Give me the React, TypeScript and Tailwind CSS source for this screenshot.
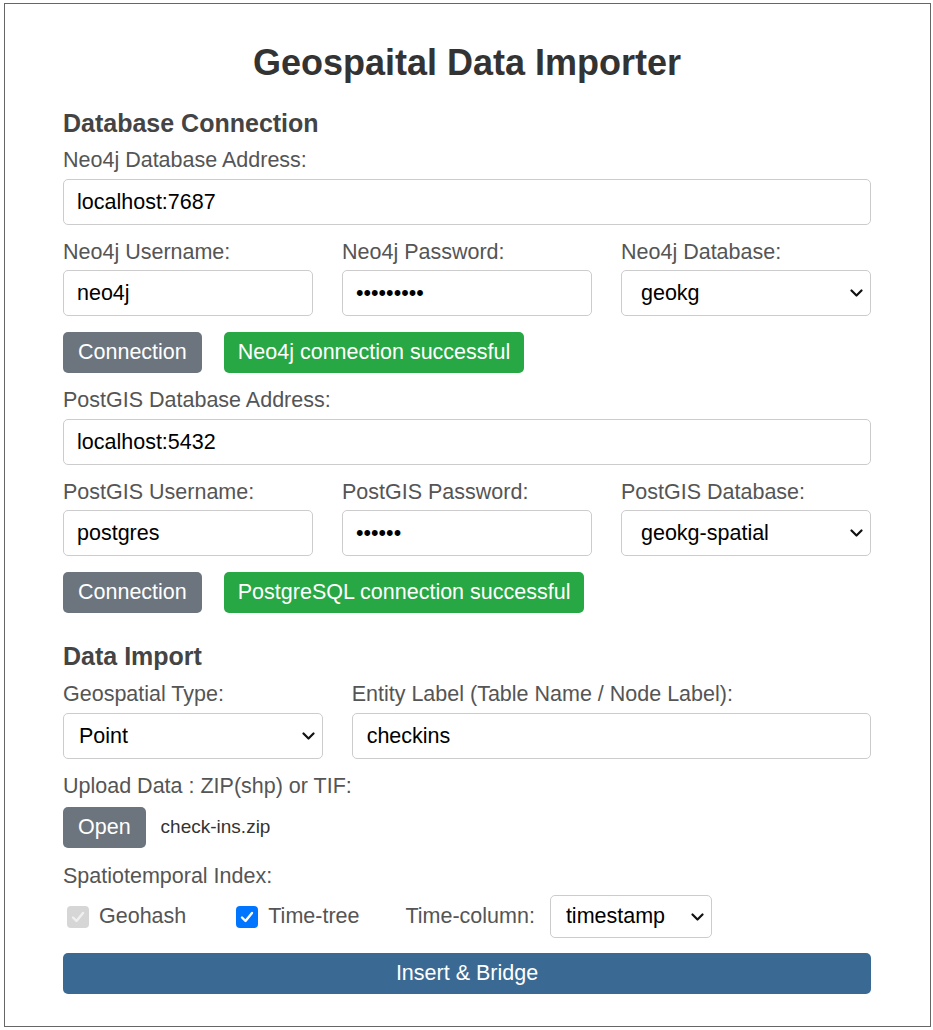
import type { ReactNode } from "react";

function Label({ children, className = "" }: { children: ReactNode; className?: string }) {
  return <div className={`text-[21.5px] leading-[24px] text-[#555] ${className}`}>{children}</div>;
}

function TextInput({ value, type = "text", className = "" }: { value: string; type?: string; className?: string }) {
  return (
    <input
      type={type}
      defaultValue={value}
      readOnly
      className={`block h-[46px] w-full rounded-[5px] border border-[#ccc] bg-white pl-[13px] text-[21.5px] text-black outline-none ${className}`}
    />
  );
}

function Chevron() {
  return (
    <svg width="13" height="8" viewBox="0 0 13 8" className="pointer-events-none absolute right-[8px] top-1/2 -translate-y-1/2">
      <path d="M1.5 1.5 L6.5 6.5 L11.5 1.5" fill="none" stroke="#111" strokeWidth="2.2" strokeLinecap="round" strokeLinejoin="round" />
    </svg>
  );
}

function Select({ value, className = "", pad = "pl-[15px]" }: { value: string; className?: string; pad?: string }) {
  return (
    <div className={`relative ${className}`}>
      <select
        defaultValue={value}
        className={`block h-full w-full appearance-none rounded-[5px] border border-[#ccc] bg-white ${pad} pr-[30px] text-[21.5px] text-black outline-none`}
      >
        <option>{value}</option>
      </select>
      <Chevron />
    </div>
  );
}

function GrayButton({ children }: { children: ReactNode }) {
  return (
    <button className="h-[41px] rounded-[5px] bg-[#6c757d] px-[15px] text-[21.5px] text-white">
      {children}
    </button>
  );
}

function Badge({ children }: { children: ReactNode }) {
  return (
    <span className="ml-[22px] flex h-[41px] items-center rounded-[5px] bg-[#28a745] px-[14px] text-[21.5px] text-white">
      {children}
    </span>
  );
}

function Check({ disabled = false }: { disabled?: boolean }) {
  return (
    <span
      className={`flex h-[22px] w-[22px] items-center justify-center rounded-[4px] ${
        disabled ? "bg-[#d6d6d6]" : "bg-[#0075ff]"
      }`}
    >
      <svg width="14" height="12" viewBox="0 0 14 12">
        <path
          d="M2 6.5 L5.5 10 L12 2"
          fill="none"
          stroke={disabled ? "#f0f0f0" : "#fff"}
          strokeWidth="2.4"
          strokeLinecap="round"
          strokeLinejoin="round"
        />
      </svg>
    </span>
  );
}

export default function App() {
  return (
    <main className="min-h-screen bg-white pl-[4px] pt-[3px] font-['Liberation_Sans',Arial,sans-serif]">
      <div className="w-[927px] border border-[#666] pb-[32px] pl-[58px] pr-[59px] pt-[37px]">
        <h1 className="text-center text-[36px] font-bold leading-[44px] text-[#333]">
          Geospaital Data Importer
        </h1>

        <h3 className="mt-[23px] text-[25px] font-bold leading-[30px] text-[#444]">Database Connection</h3>

        <Label className="mt-[10px]">Neo4j Database Address:</Label>
        <TextInput value="localhost:7687" className="mt-[7px]" />

        <div className="mt-[15px] grid grid-cols-3 gap-x-[29px]">
          <div>
            <Label>Neo4j Username:</Label>
            <TextInput value="neo4j" className="mt-[6px]" />
          </div>
          <div>
            <Label>Neo4j Password:</Label>
            <TextInput value="geokg1234" type="password" className="mt-[6px]" />
          </div>
          <div>
            <Label>Neo4j Database:</Label>
            <Select value="geokg" pad="pl-[19px]" className="mt-[6px] h-[46px]" />
          </div>
        </div>

        <div className="mt-[16px] flex items-center">
          <GrayButton>Connection</GrayButton>
          <Badge>Neo4j connection successful</Badge>
        </div>

        <Label className="mt-[15px]">PostGIS Database Address:</Label>
        <TextInput value="localhost:5432" className="mt-[7px]" />

        <div className="mt-[15px] grid grid-cols-3 gap-x-[29px]">
          <div>
            <Label>PostGIS Username:</Label>
            <TextInput value="postgres" className="mt-[6px]" />
          </div>
          <div>
            <Label>PostGIS Password:</Label>
            <TextInput value="123456" type="password" className="mt-[6px]" />
          </div>
          <div>
            <Label>PostGIS Database:</Label>
            <Select value="geokg-spatial" pad="pl-[19px]" className="mt-[6px] h-[46px]" />
          </div>
        </div>

        <div className="mt-[16px] flex items-center">
          <GrayButton>Connection</GrayButton>
          <Badge>PostgreSQL connection successful</Badge>
        </div>

        <h3 className="mt-[28px] text-[25px] font-bold leading-[30px] text-[#444]">Data Import</h3>

        <div className="mt-[11px] grid grid-cols-[1fr_2fr] gap-x-[29px]">
          <div>
            <Label>Geospatial Type:</Label>
            <Select value="Point" className="mt-[7px] h-[46px]" />
          </div>
          <div>
            <Label>Entity Label (Table Name / Node Label):</Label>
            <TextInput value="checkins" className="mt-[7px] pl-[14px]" />
          </div>
        </div>

        <Label className="mt-[15px]">Upload Data : ZIP(shp) or TIF:</Label>
        <div className="mt-[9px] flex items-center">
          <GrayButton>Open</GrayButton>
          <span className="ml-[15px] text-[19px] text-[#333]">check-ins.zip</span>
        </div>

        <Label className="mt-[16px]">Spatiotemporal Index:</Label>
        <div className="mt-[7px] flex items-center text-[21.5px] text-[#555]">
          <span className="ml-[4px]">
            <Check disabled />
          </span>
          <span className="ml-[10px]">Geohash</span>
          <span className="ml-[50px]">
            <Check />
          </span>
          <span className="ml-[10px]">Time-tree</span>
          <span className="ml-[46px]">Time-column:</span>
          <Select value="timestamp" className="ml-[15px] h-[43px] w-[162px]" />
        </div>

        <button className="mt-[15px] block h-[41px] w-full rounded-[5px] bg-[#3a6a93] text-[21.5px] text-white">
          Insert &amp; Bridge
        </button>
      </div>
    </main>
  );
}
